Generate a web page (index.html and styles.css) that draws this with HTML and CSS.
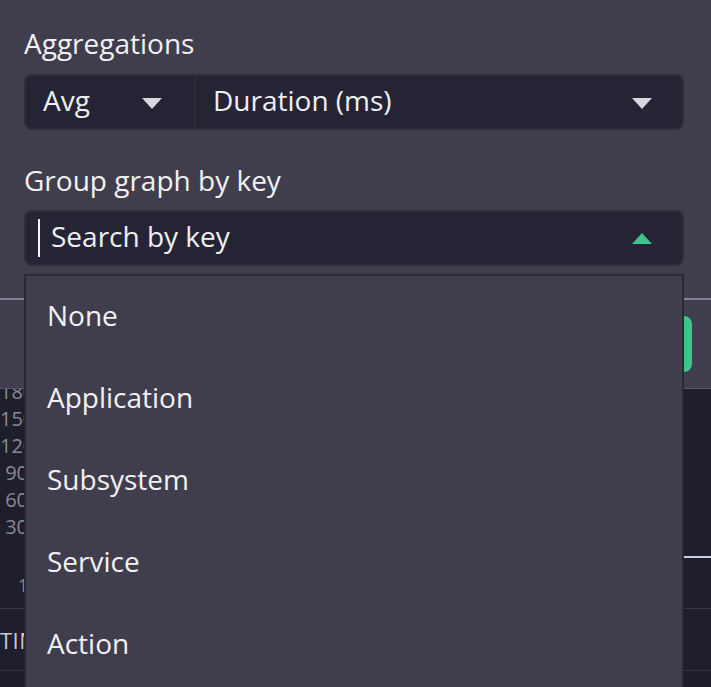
FILE: index.html
```html
<!DOCTYPE html>
<html lang="en">
<head>
<meta charset="utf-8">
<title>Aggregations</title>
<link rel="stylesheet" href="styles.css">
</head>
<body>
  <section class="panel">
    <div class="field-label">Aggregations</div>
    <div class="select-box">
      <div class="seg seg-fn">
        <span class="seg-text">Avg</span>
        <svg class="tri" width="20" height="11" viewBox="0 0 20 11"><polygon points="0,0 20,0 10,11" fill="#d7d6de"/></svg>
      </div>
      <div class="seg seg-field">
        <span class="seg-text">Duration (ms)</span>
        <svg class="tri" width="20" height="11" viewBox="0 0 20 11"><polygon points="0,0 20,0 10,11" fill="#d7d6de"/></svg>
      </div>
    </div>
    <div class="field-label label-group">Group graph by key</div>
    <div class="select-box search-box">
      <span class="caret"></span>
      <span class="seg-text search-text">Search by key</span>
      <svg class="tri tri-up" width="20" height="11" viewBox="0 0 20 11"><polygon points="0,11 20,11 10,0" fill="#3dc38d"/></svg>
    </div>
  </section>

  <section class="toolbar">
    <div class="run-btn"></div>
  </section>

  <section class="chart">
    <div class="chart-main">
      <ul class="y-axis">
        <li>180</li>
        <li>150</li>
        <li>120</li>
        <li>90</li>
        <li>60</li>
        <li>30</li>
      </ul>
      <div class="plot"></div>
    </div>
    <div class="x-axis"><span class="clip">10:00</span></div>
  </section>

  <section class="table">
    <div class="table-head"><span class="clip">TIME</span></div>
    <div class="table-row"></div>
  </section>

  <ul class="dropdown">
    <li>None</li>
    <li>Application</li>
    <li>Subsystem</li>
    <li>Service</li>
    <li>Action</li>
  </ul>
</body>
</html>
```

FILE: styles.css
```css
html, body {
  margin: 0;
  padding: 0;
  overflow: hidden;
}

body {
  background: #403e4c;
  font-family: "Open Sans", "Noto Sans", sans-serif;
  color: #eeeef3;
  width: 711px;
  height: 687px;
  position: relative;
}

.panel {
  padding: 27px 27px 32px 24px;
  height: 239px;
}

.field-label {
  font-size: 28px;
  line-height: 32px;
  color: #f1f1f5;
  margin-bottom: 15px;
}

.label-group {
  margin-top: 34px;
  margin-bottom: 14px;
}

.select-box {
  display: flex;
  align-items: center;
  height: 52px;
  background: #252435;
  border: 2px solid #2e2d36;
  border-radius: 8px;
}

.seg {
  display: flex;
  align-items: center;
  height: 100%;
}

.seg-fn {
  width: 168px;
  border-right: 2px solid #2e2d36;
}

.seg-field {
  flex: 1;
}

.seg-text {
  font-size: 28px;
  line-height: 48px;
  padding: 0 0 4px 17px;
  color: #eeeef3;
}

.tri {
  display: block;
  margin-left: auto;
  margin-top: 3px;
}

.seg-fn .tri {
  margin-right: 32px;
}

.seg-field .tri {
  margin-right: 30px;
}

.search-box .caret {
  width: 2px;
  height: 38px;
  background: #f4f4f8;
  margin-left: 12px;
}

.search-box .search-text {
  padding-left: 11px;
}

.tri-up {
  margin-right: 30px;
  margin-top: 0;
}

.toolbar {
  border-top: 2px solid #7d8496;
  border-bottom: 1px solid #5b5a69;
  height: 72px;
  padding: 16px 19px 0 0;
  display: flex;
  justify-content: flex-end;
}

.run-btn {
  width: 120px;
  height: 56px;
  background: #3cc48c;
  border-radius: 8px;
}

.chart {
  background: #1f1e2d;
  height: 219px;
  overflow: hidden;
}

.chart-main {
  display: flex;
  height: 169px;
}

.y-axis {
  list-style: none;
  margin: -11px 0 0 0;
  padding: 0;
  width: 24px;
  overflow: hidden;
  font-size: 20px;
  line-height: 27px;
  color: #8a8993;
}

.y-axis li {
  width: 28px;
  text-align: right;
  white-space: nowrap;
}

.plot {
  flex: 1;
  margin-left: 5px;
  height: 167px;
  border-bottom: 2px solid #c8cce6;
}

.x-axis {
  padding: 14px 0 0 18px;
  font-size: 18px;
  line-height: 27px;
  color: #8a8993;
}

.clip {
  display: inline-block;
  overflow: hidden;
  white-space: nowrap;
  vertical-align: top;
}

.x-axis .clip {
  width: 6px;
}

.table {
  background: #1f1e2d;
}

.table-head {
  border-top: 1px solid #38373f;
  border-bottom: 1px solid #38373f;
  height: 61px;
  display: flex;
  align-items: center;
  font-size: 22px;
  color: #c9c8d6;
  letter-spacing: 0.5px;
}

.table-head .clip {
  width: 24px;
}

.table-row {
  height: 40px;
  background: #1d1c2a;
}

.dropdown {
  position: absolute;
  top: 274px;
  left: 24px;
  width: 656px;
  height: 420px;
  margin: 0;
  padding: 0;
  list-style: none;
  background: #403e4c;
  border: 2px solid #2b2a31;
}

.dropdown li {
  font-size: 28px;
  line-height: 78px;
  padding: 0 0 4px 21px;
  color: #f1f1f5;
}
```
